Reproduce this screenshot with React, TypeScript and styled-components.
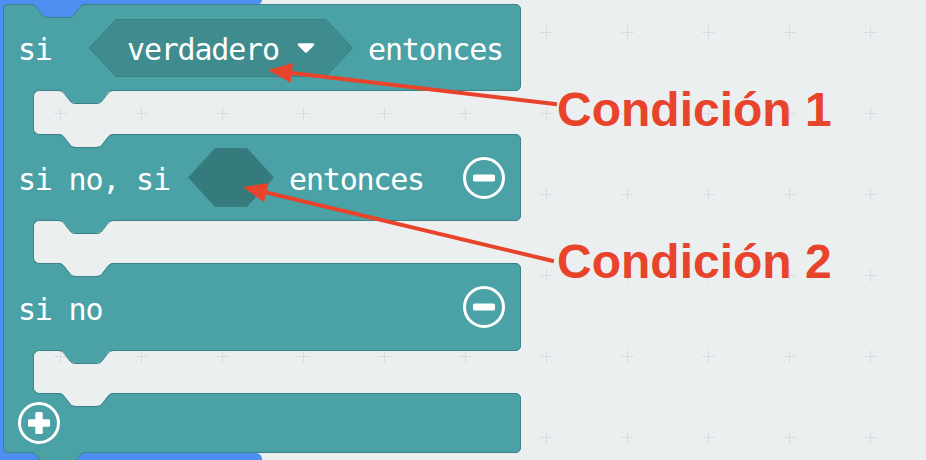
import React from "react";
import styled, { createGlobalStyle } from "styled-components";

const TEAL = "#4aa2a6";
const TEAL_DARK = "#3b8185";
const FIELD = "#3f8c8f";
const FIELD_EDGE = "#397f82";
const FIELD_EMPTY = "#357a7d";
const BLUE = "#4c8ff0";
const BG = "#eceff0";
const RED = "#e8432b";

const GRID = `url("data:image/svg+xml,%3Csvg xmlns='http://www.w3.org/2000/svg' width='81' height='81'%3E%3Cpath d='M34 40.5h13M40.5 34v13' stroke='%23d9dddf' stroke-width='1' fill='none'/%3E%3C/svg%3E")`;

const GlobalStyle = createGlobalStyle`
  html, body { margin: 0; padding: 0; }
  body {
    background-color: ${BG};
    background-image: ${GRID};
    background-size: 81px 81px;
    background-position: 20px -8px;
    overflow: hidden;
  }
`;

const Stage = styled.div`
  position: relative;
  width: 926px;
  height: 460px;
  overflow: hidden;
  display: flex;
  align-items: flex-start;
`;

const Workspace = styled.div`
  flex: none;
  width: 521px;
  display: flex;
  flex-direction: column;
`;

const BlueTop = styled.div`
  width: 262px;
  height: 4px;
  background: ${BLUE};
  border-bottom-right-radius: 6px;
`;

const BlueBottom = styled.div`
  width: 262px;
  height: 7px;
  background: ${BLUE};
  border-top-right-radius: 6px;
`;

const WrapRow = styled.div`
  display: flex;
`;

const BlueArm = styled.div`
  flex: none;
  width: 3px;
  background: ${BLUE};
`;

const IfBlock = styled.div`
  position: relative;
  z-index: 1;
  width: 518px;
  display: flex;
  flex-direction: column;
  background: linear-gradient(to right, ${BLUE} 0 8px, transparent 8px);
`;

type BarPos = "first" | "middle" | "last";

const Bar = styled.div<{ $pos: BarPos; $h: number }>`
  box-sizing: border-box;
  height: ${(p) => p.$h}px;
  display: flex;
  align-items: center;
  padding: 0 15px 0 14px;
  background: ${TEAL};
  border: 1px solid ${TEAL_DARK};
  border-radius: ${(p) =>
    p.$pos === "first" ? "5px 5px 5px 0" : p.$pos === "last" ? "0 5px 5px 5px" : "0 5px 5px 0"};
  color: #fff;
  font-family: "DejaVu Sans Mono", monospace;
  font-size: 30px;
  letter-spacing: -1.2px;
`;

const Slot = styled.div<{ $h: number }>`
  position: relative;
  z-index: 1;
  box-sizing: border-box;
  height: ${(p) => p.$h}px;
  margin: -1px 0;
  display: flex;
  border-left: 1px solid ${TEAL_DARK};
  background: linear-gradient(to right, ${TEAL} 0 40px, transparent 40px);
`;

const Mouth = styled.div`
  position: relative;
  flex: 1;
  margin: 0 4px 0 29px;
  border: 1px solid ${TEAL_DARK};
  border-right: none;
  border-radius: 6px 0 0 6px;
  background-color: ${BG};
  background-image: ${GRID};
  background-size: 81px 81px;
  background-position: 20px -8px;
  background-attachment: fixed;
`;

const Word = styled.span<{ $ml?: number }>`
  display: block;
  flex: none;
  padding-top: 4px;
  margin-left: ${(p) => p.$ml ?? 0}px;
  white-space: pre;
`;

const Field = styled.div<{ $w: number; $h: number; $ml: number }>`
  position: relative;
  isolation: isolate;
  flex: none;
  box-sizing: border-box;
  width: ${(p) => p.$w}px;
  height: ${(p) => p.$h}px;
  margin-left: ${(p) => p.$ml}px;
  padding: 0 38px;
  display: flex;
  align-items: center;
`;

const FieldShape = styled.svg`
  position: absolute;
  left: 0;
  top: 0;
  z-index: -1;
  overflow: visible;
`;

const Caret = styled.svg`
  flex: none;
  margin-left: 18px;
  margin-top: 1px;
`;

const RoundButton = styled.svg<{ $push?: boolean }>`
  flex: none;
  margin-left: ${(p) => (p.$push ? "auto" : "0")};
`;

const NotchSvg = styled.svg<{ $top: string; $left: number }>`
  position: absolute;
  top: ${(p) => p.$top};
  left: ${(p) => p.$left}px;
  z-index: 2;
  overflow: visible;
`;

const Callouts = styled.div`
  flex: none;
  display: flex;
  flex-direction: column;
  gap: 104px;
  padding-top: 86px;
  margin-left: 36px;
`;

const Callout = styled.div`
  font-family: "Liberation Sans", Arial, sans-serif;
  font-weight: 700;
  font-size: 48px;
  line-height: 48px;
  color: ${RED};
  white-space: nowrap;
`;

const Overlay = styled.svg`
  position: absolute;
  left: 0;
  top: 0;
  z-index: 5;
  pointer-events: none;
`;

const NOTCH_FILL =
  "M0 0 C3.5 0 5 1.5 7 4 L12 10.5 C13.5 12.3 15 13 18 13 H38 C41 13 42.5 12.3 44 10.5 L49 4 C51 1.5 52.5 0 56 0 Z";
const NOTCH_EDGE =
  "M0 0.5 C3.5 0.5 5 2 7 4.5 L12 11 C13.5 12.8 15 13.5 18 13.5 H38 C41 13.5 42.5 12.8 44 11 L49 4.5 C51 2 52.5 0.5 56 0.5";

function Notch({ fill, top, left }: { fill: string; top: string; left: number }) {
  return (
    <NotchSvg $top={top} $left={left} width="56" height="15" viewBox="0 0 56 15">
      <path d={NOTCH_FILL} fill={fill} />
      <path d={NOTCH_EDGE} fill="none" stroke={TEAL_DARK} strokeWidth="1" />
    </NotchSvg>
  );
}

function Hexagon({ w, h, fill }: { w: number; h: number; fill: string }) {
  const s = 27;
  const m = h / 2;
  const pts = `0.5,${m} ${s},0.5 ${w - s},0.5 ${w - 0.5},${m} ${w - s},${h - 0.5} ${s},${h - 0.5}`;
  return (
    <FieldShape width={w} height={h} viewBox={`0 0 ${w} ${h}`}>
      <polygon points={pts} fill={fill} stroke={FIELD_EDGE} strokeWidth="1" strokeLinejoin="round" />
    </FieldShape>
  );
}

function MinusButton() {
  return (
    <RoundButton $push width="42" height="42" viewBox="0 0 42 42">
      <circle cx="21" cy="21" r="19.5" fill="none" stroke="#fff" strokeWidth="3" />
      <rect x="10" y="17.5" width="22" height="7" rx="1.5" fill="#fff" />
    </RoundButton>
  );
}

function PlusButton() {
  return (
    <RoundButton width="42" height="42" viewBox="0 0 42 42">
      <circle cx="21" cy="21" r="19.5" fill="none" stroke="#fff" strokeWidth="3" />
      <rect x="10" y="17.25" width="22" height="7.5" rx="1.5" fill="#fff" />
      <rect x="17.25" y="10" width="7.5" height="22" rx="1.5" fill="#fff" />
    </RoundButton>
  );
}

function StatementGap({ h }: { h: number }) {
  return (
    <Slot $h={h}>
      <Mouth>
        <Notch fill={TEAL} top="-1px" left={24} />
        <Notch fill={BG} top="100%" left={24} />
      </Mouth>
    </Slot>
  );
}

export default function App() {
  return (
    <>
      <GlobalStyle />
      <Stage>
        <Workspace>
          <BlueTop />
          <WrapRow>
            <BlueArm />
            <IfBlock>
              <Notch fill={BLUE} top="0px" left={27} />
              <Bar $pos="first" $h={87}>
                <Word>si</Word>
                <Field $w={264} $h={58} $ml={37.3}>
                  <Hexagon w={264} h={58} fill={FIELD} />
                  <Word>verdadero</Word>
                  <Caret width="18" height="10" viewBox="0 0 18 10">
                    <path d="M2 1.5 H16 L9 8.5 Z" fill="#fff" stroke="#fff" strokeWidth="2.5" strokeLinejoin="round" />
                  </Caret>
                </Field>
                <Word $ml={15}>entonces</Word>
              </Bar>
              <StatementGap h={45} />
              <Bar $pos="middle" $h={87}>
                <Word>si no, si</Word>
                <Field $w={86} $h={59} $ml={18.3}>
                  <Hexagon w={86} h={59} fill={FIELD_EMPTY} />
                </Field>
                <Word $ml={15}>entonces</Word>
                <MinusButton />
              </Bar>
              <StatementGap h={44} />
              <Bar $pos="middle" $h={88}>
                <Word>si no</Word>
                <MinusButton />
              </Bar>
              <StatementGap h={44} />
              <Bar $pos="last" $h={60}>
                <PlusButton />
              </Bar>
              <Notch fill={TEAL} top="calc(100% - 1px)" left={27} />
            </IfBlock>
          </WrapRow>
          <BlueBottom />
        </Workspace>
        <Callouts>
          <Callout>Condición 1</Callout>
          <Callout>Condición 2</Callout>
        </Callouts>
        <Overlay width="926" height="460" viewBox="0 0 926 460">
          <line x1="286" y1="72.3" x2="557" y2="104.2" stroke={RED} strokeWidth="4" />
          <polygon points="268,70 293,62.9 290.6,82.7" fill={RED} />
          <line x1="262" y1="191.5" x2="554" y2="261.2" stroke={RED} strokeWidth="4" />
          <polygon points="243,187 268.7,182.9 264,202.3" fill={RED} />
        </Overlay>
      </Stage>
    </>
  );
}
